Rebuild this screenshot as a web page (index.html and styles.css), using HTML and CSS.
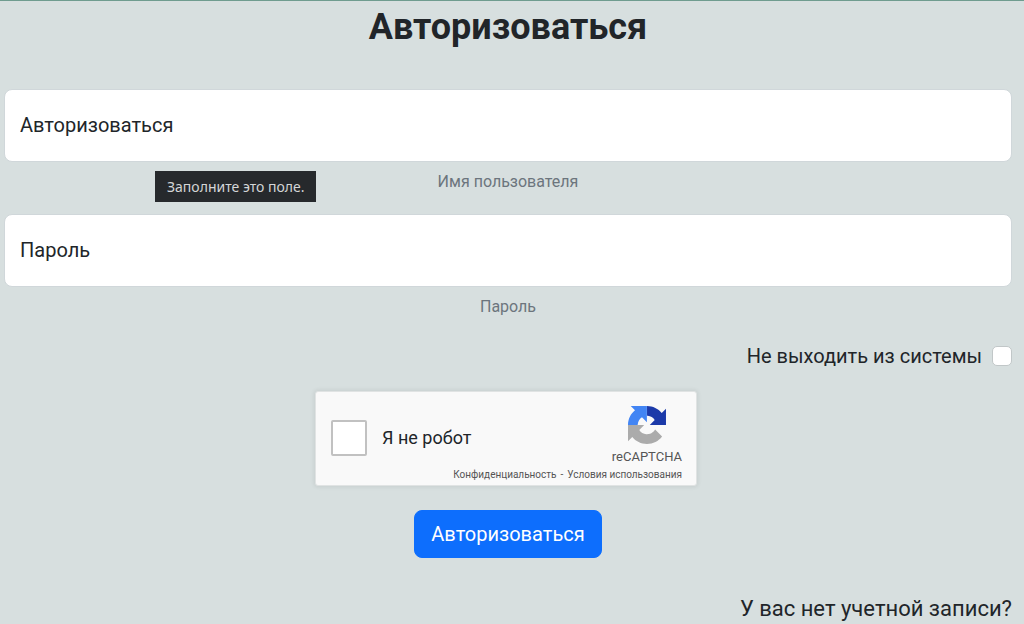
FILE: index.html
```html
<!DOCTYPE html>
<html lang="ru">
<head>
<meta charset="utf-8">
<meta name="viewport" content="width=device-width, initial-scale=1">
<title>Авторизоваться</title>
<link rel="stylesheet" href="styles.css">
</head>
<body>
<main class="page">
  <h1 class="title">Авторизоваться</h1>
  <form class="form">
    <div class="field">
      <input class="field-input" id="login" type="text" placeholder="Авторизоваться">
      <label class="field-label" for="login">Имя пользователя</label>
      <div class="tooltip" role="tooltip">Заполните это поле.</div>
    </div>
    <div class="field">
      <input class="field-input" id="password" type="password" placeholder="Пароль">
      <label class="field-label" for="password">Пароль</label>
    </div>
    <div class="remember">
      <label for="remember">Не выходить из системы</label>
      <input class="remember-box" id="remember" type="checkbox">
    </div>
    <div class="captcha">
      <div class="captcha-check">
        <input class="captcha-box" id="robot" type="checkbox">
        <label for="robot">Я не робот</label>
      </div>
      <div class="captcha-brand">
        <svg class="captcha-logo" viewBox="0 0 64 64" aria-hidden="true">
          <path fill="#1c3aa9" d="M64 31.955l-.033-1.37V4.687l-7.16 7.16C50.948 4.674 42.033.093 32.05.093V16.355c.485 0 .86.057 1.135.163 4.976.393 9.288 3.14 11.828 7.124l-8.307 8.307L64 31.953"/>
          <path fill="#4285f4" d="M31.862.094l-1.37.033H4.594l7.16 7.16C4.58 13.147 0 22.06 0 32.046H16.26c0-.485.057-.86.163-1.135.393-4.976 3.14-9.288 7.124-11.828l8.307 8.307L31.86.095"/>
          <path fill="#ababab" d="M.001 32.045l.033 1.37v25.898l7.16-7.16c5.86 7.173 14.774 11.754 24.76 11.754 10.4 0 19.622-4.96 25.458-12.64l-11.736-11.86a15.55 15.55 0 0 1-4.754 5.334c-2.05 1.6-4.952 2.906-8.968 2.906-.485 0-.86-.057-1.135-.163-4.976-.393-9.288-3.14-11.828-7.124l8.307-8.307c-10.522.04-22.4.066-27.295-.005"/>
        </svg>
        <span class="captcha-name">reCAPTCHA</span>
      </div>
      <div class="captcha-links">
        <a href="#privacy">Конфиденциальность</a>
        <span>-</span>
        <a href="#terms">Условия использования</a>
      </div>
    </div>
    <button class="submit" type="submit">Авторизоваться</button>
  </form>
  <p class="signup">У вас нет учетной записи?</p>
</main>
</body>
</html>
```
FILE: styles.css
```css
* {
  box-sizing: border-box;
}

body {
  margin: 0;
  background: #d7dfdf;
  color: #212529;
  font-family: Roboto, "Noto Sans", sans-serif;
  font-size: 20px;
  line-height: 30px;
}

.page {
  border-top: 1px solid #6f9c8f;
  padding: 4px 12px 0 4px;
}

.title {
  margin: 0 0 40px;
  font-size: 36px;
  line-height: 44px;
  font-weight: 700;
  text-align: center;
}

.form {
  display: flex;
  flex-direction: column;
}

.field {
  position: relative;
  display: flex;
  flex-direction: column;
  align-items: center;
  gap: 8px;
  margin-bottom: 20px;
}

.field-input {
  width: 100%;
  height: 73px;
  padding: 0 15px 2px;
  border: 1px solid #d0d7da;
  border-radius: 8px;
  background: #fff;
  color: #212529;
  font: inherit;
}

.field-input::placeholder {
  color: #212529;
  opacity: 1;
}

.field-label {
  color: #6c757d;
  font-size: 16px;
  line-height: 24px;
}

.tooltip {
  position: absolute;
  top: 82px;
  left: 151px;
  padding: 0 12px;
  background: #26292c;
  color: #d4d6d7;
  font-family: "Noto Sans", "Open Sans", sans-serif;
  font-size: 14px;
  line-height: 31px;
}

.remember {
  display: flex;
  align-items: center;
  justify-content: flex-end;
  gap: 10px;
  margin: 2px 0 20px;
}

.remember-box {
  appearance: none;
  width: 20px;
  height: 20px;
  margin: 0;
  border: 1px solid #c1c7c8;
  border-radius: 5px;
  background: #fff;
}

.captcha {
  align-self: center;
  display: grid;
  grid-template-columns: 1fr auto;
  width: 382px;
  padding: 14px 14px 6px 15px;
  margin: 0 4px 24px 0;
  border: 1px solid #e0e3e3;
  border-radius: 3px;
  background: #f9f9f9;
  box-shadow: 0 0 4px 1px rgba(0, 0, 0, 0.08);
}

.captcha-check {
  display: flex;
  align-items: center;
  gap: 15px;
  font-size: 18px;
}

.captcha-box {
  appearance: none;
  width: 36px;
  height: 36px;
  margin: 0;
  border: 2px solid #c1c1c1;
  border-radius: 2px;
  background: #fff;
}

.captcha-brand {
  display: flex;
  flex-direction: column;
  align-items: center;
  color: #555;
}

.captcha-logo {
  width: 38px;
  height: 38px;
}

.captcha-name {
  font-size: 13px;
  line-height: 26px;
}

.captcha-links {
  grid-column: 1 / -1;
  display: flex;
  justify-content: flex-end;
  gap: 4px;
  color: #555;
  font-size: 10px;
  line-height: 9px;
}

.captcha-links a {
  color: inherit;
  text-decoration: none;
}

.submit {
  align-self: center;
  padding: 8px 16px;
  border: 1px solid #0d6efd;
  border-radius: 8px;
  background: #0d6efd;
  color: #fff;
  font: inherit;
}

.signup {
  margin: 36px 0 0;
  font-size: 22px;
  text-align: right;
}
```
